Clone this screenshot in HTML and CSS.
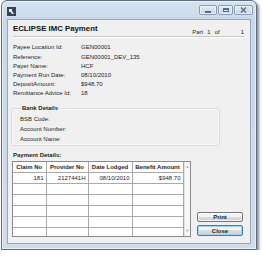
FILE: index.html
```html
<!DOCTYPE html>
<html lang="en">
<head>
    <meta charset="UTF-8">
    <title>ECLIPSE IMC Payment</title>
    <link rel="stylesheet" href="styles.css">
</head>
<body>
    <div class="window">
        <div class="titlebar">
            <svg class="app-icon" width="9" height="9" viewBox="0 0 9 9">
                <rect x="0" y="0" width="9" height="9" fill="#3b4552"/>
                <path d="M2 2 L5 2 L5 4 L7 7 L5 7 L3.5 5 L2 5 Z" fill="#e8edf2"/>
            </svg>
            <div class="caption-buttons">
                <div class="cap-btn cap-min"><span class="glyph-min"></span></div>
                <div class="cap-btn cap-max"><span class="glyph-max"></span></div>
                <div class="cap-btn cap-close">
                    <svg width="7" height="6" viewBox="0 0 7 6"><path d="M1 0.5 L6 5.5 M6 0.5 L1 5.5" stroke="#5d6d80" stroke-width="1.4"/></svg>
                </div>
            </div>
        </div>

        <div class="client">
            <div class="header">
                <h1>ECLIPSE IMC Payment</h1>
                <div class="part">
                    <span>Part</span>
                    <span>1</span>
                    <span>of</span>
                    <span class="part-total">1</span>
                </div>
            </div>

            <div class="fields">
                <div class="field first"><span class="label">Payee Location Id:</span><span>GEN00001</span></div>
                <div class="field"><span class="label">Reference:</span><span>GEN00001_DEV_135</span></div>
                <div class="field"><span class="label">Payer Name:</span><span>HCF</span></div>
                <div class="field"><span class="label">Payment Run Date:</span><span>08/10/2010</span></div>
                <div class="field"><span class="label">DepositAmount:</span><span>$948.70</span></div>
                <div class="field"><span class="label">Remittance Advice Id:</span><span>18</span></div>
            </div>

            <fieldset class="bank">
                <legend>Bank Details</legend>
                <div class="bank-row">BSB Code:</div>
                <div class="bank-row">Account Number:</div>
                <div class="bank-row">Account Name:</div>
            </fieldset>

            <div class="section-title">Payment Details:</div>

            <div class="payments">
                <div class="grid-box">
                    <table class="grid">
                        <colgroup>
                            <col class="c-claim"><col class="c-provider"><col class="c-date"><col class="c-amount">
                        </colgroup>
                        <thead>
                            <tr><th>Claim No</th><th>Provider No</th><th>Date Lodged</th><th>Benefit Amount</th></tr>
                        </thead>
                        <tbody>
                            <tr><td>181</td><td>2127441H</td><td>08/10/2010</td><td>$948.70</td></tr>
                            <tr><td></td><td></td><td></td><td></td></tr>
                            <tr><td></td><td></td><td></td><td></td></tr>
                            <tr><td></td><td></td><td></td><td></td></tr>
                            <tr><td></td><td></td><td></td><td></td></tr>
                            <tr><td></td><td></td><td></td><td></td></tr>
                        </tbody>
                    </table>
                    <div class="scrollbar">
                        <span class="arrow">&#9650;</span>
                        <span class="arrow">&#9660;</span>
                    </div>
                </div>
                <div class="actions">
                    <button>Print</button>
                    <button class="default">Close</button>
                </div>
            </div>
        </div>
    </div>
</body>
</html>
```

FILE: styles.css
```css
body {
    margin: 0;
    background: #ffffff;
    font-family: "Liberation Sans", Arial, sans-serif;
    font-size: 6px;
    color: #1e1e1e;
}
.window {
    margin-left: 1px;
    width: 256px;
    height: 250px;
    box-sizing: border-box;
    border: 1px solid #5e6d80;
    border-radius: 6px 6px 0 0;
    background: linear-gradient(#d6e2ef, #c9d8e9 20px, #cfdcec);
    box-shadow: 2px 2px 3px rgba(0,0,0,0.45), inset 0 0 0 1px rgba(255,255,255,0.55);
    padding: 0 5px 5px 5px;
    display: flex;
    flex-direction: column;
}
.titlebar {
    height: 18px;
    display: flex;
    align-items: flex-start;
}
.app-icon {
    margin: 6px 0 0 0;
}
.caption-buttons {
    margin-left: auto;
    margin-top: 4px;
    margin-right: -2px;
    display: flex;
    gap: 1px;
}
.cap-btn {
    height: 10px;
    box-sizing: border-box;
    border: 1px solid #8a9bb1;
    border-radius: 2px;
    background: linear-gradient(#e3ecf6, #c5d4e6);
    box-shadow: inset 0 0 0 1px rgba(255,255,255,0.6);
    display: flex;
    align-items: center;
    justify-content: center;
}
.cap-min { width: 18px; }
.cap-max { width: 15px; }
.cap-close { width: 19px; }
.glyph-min {
    width: 6px;
    height: 2px;
    margin-top: 3px;
    background: #5d6d80;
}
.glyph-max {
    width: 6px;
    height: 4px;
    box-sizing: border-box;
    border: 1px solid #5d6d80;
    border-top-width: 2px;
}
.client {
    flex: 1;
    background: #f0f0f0;
    border: 1px solid #97a8bc;
    padding: 0 6px 0 5px;
}
.header {
    margin-top: 4px;
    height: 12px;
    display: flex;
    border-bottom: 1px solid #c6c6c6;
    box-shadow: 0 1px #ffffff;
}
.header h1 {
    margin: 0;
    font-size: 7.8px;
    line-height: 10px;
    font-weight: bold;
    color: #111;
}
.part {
    margin-left: auto;
    align-self: flex-end;
    line-height: 8px;
    display: flex;
    gap: 4px;
}
.part-total {
    margin-left: 17px;
}
.fields {
    margin-top: 6px;
}
.field {
    display: flex;
    line-height: 9px;
}
.field.first {
    margin-bottom: 1px;
}
.label {
    width: 68px;
}
.bank {
    margin: 6px 0 0 -2px;
    width: 209px;
    box-sizing: border-box;
    border: 1px solid #d5dfe5;
    border-radius: 3px;
    padding: 1px 0 1px 8px;
    box-shadow: inset 0 0 0 1px rgba(255,255,255,0.5);
}
.bank legend {
    margin-left: 1px;
    padding: 0 1px;
    font-weight: bold;
    line-height: 9px;
}
.bank-row {
    line-height: 10px;
}
.section-title {
    margin-top: 5px;
    line-height: 9px;
    font-weight: bold;
}
.payments {
    margin-top: 1px;
    display: flex;
    gap: 6px;
    align-items: flex-end;
}
.grid-box {
    margin-left: -1px;
    width: 179px;
    height: 76px;
    box-sizing: border-box;
    border: 1px solid #8a8a8a;
    background: #ffffff;
    display: flex;
    overflow: hidden;
}
.grid {
    border-collapse: collapse;
    table-layout: fixed;
    width: 170px;
    font-size: 6px;
}
.c-claim { width: 33px; }
.c-provider { width: 42px; }
.c-date { width: 44px; }
.c-amount { width: 51px; }
.grid th, .grid td {
    height: 10px;
    padding: 0 2px;
    border: 1px solid #a9a9a9;
    white-space: nowrap;
    overflow: hidden;
    line-height: 9px;
}
.grid th {
    font-weight: bold;
    text-align: center;
    border-top: none;
    padding: 0 1px;
}
.grid td {
    text-align: right;
}
.grid tr > :first-child {
    border-left: none;
}
.scrollbar {
    width: 9px;
    background: #f7f7f7;
    border-left: 1px solid #e2e2e2;
    display: flex;
    flex-direction: column;
    justify-content: space-between;
    align-items: center;
    padding: 2px 0 3px;
}
.arrow {
    font-size: 4px;
    color: #a8a8a8;
    line-height: 5px;
}
.actions {
    display: flex;
    flex-direction: column;
    gap: 3px;
    margin-bottom: 1px;
}
button {
    width: 46px;
    height: 10px;
    padding: 0;
    font-family: "Liberation Sans", Arial, sans-serif;
    font-size: 6px;
    font-weight: bold;
    color: #1e1e1e;
    border: 1px solid #777;
    border-radius: 2px;
    background: linear-gradient(#f4f4f4 50%, #dcdcdc 50%, #d0d0d0);
    box-shadow: inset 0 0 0 1px rgba(255,255,255,0.7);
}
button.default {
    height: 11px;
    border-color: #3c7fb1;
    box-shadow: inset 0 0 0 1px #9ed4f3;
}
```
